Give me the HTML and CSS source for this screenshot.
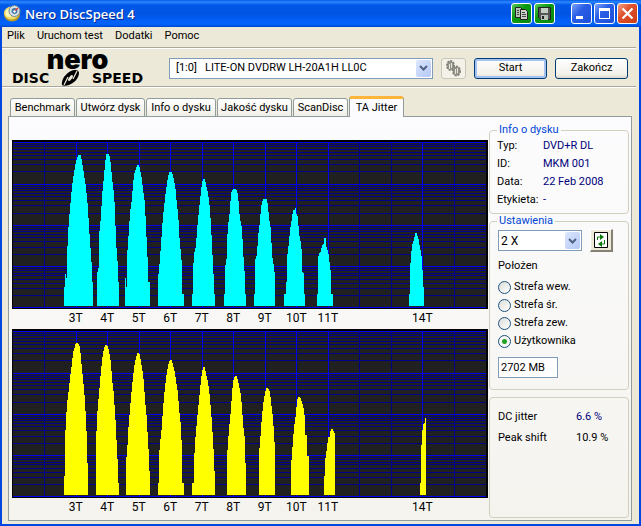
FILE: index.html
```html
<!DOCTYPE html>
<html lang="pl">
<head>
<meta charset="utf-8">
<title>Nero DiscSpeed 4</title>
<link rel="stylesheet" href="styles.css">
</head>
<body>
<div class="window">
  <header class="titlebar">
    <svg class="app-icon" viewBox="0 0 17 17" aria-hidden="true">
      <ellipse cx="8" cy="10" rx="8" ry="6.500" fill="#b99a25"/>
      <ellipse cx="7.500" cy="8" rx="7.500" ry="6.500" fill="#f0dc6a"/>
      <ellipse cx="5" cy="8" rx="3.500" ry="4" fill="#fff7b8"/>
      <circle cx="10.500" cy="6" r="5.500" fill="#d9e2e6" stroke="#6f8796"/>
      <circle cx="10.500" cy="6" r="3" fill="#3d7ba8"/>
      <path d="M10.500 6L14 3" stroke="#d33" stroke-width="1.500"/>
      <circle cx="10.500" cy="6.500" r="1.200" fill="#fff"/>
    </svg>
    <h1 class="title">Nero DiscSpeed 4</h1>
    <div class="title-buttons">
      <button class="tb green" aria-label="Kopiuj"><svg viewBox="0 0 19 19"><path d="M3.500 3.500h5l2 2v8h-7z" fill="#b8c4b8" stroke="#222"/><path d="M8.500 5.500h5l2 2v8h-7z" fill="#c8d2c8" stroke="#222"/><path d="M10 8.500h3M10 10.500h4M10 12.500h4M5 6.500h2M5 8.500h2M5 10.500h2" stroke="#444"/></svg></button>
      <button class="tb green" aria-label="Zapisz"><svg viewBox="0 0 19 19"><path d="M3.500 3.500h12v12h-10l-2-2z" fill="#555" stroke="#222"/><path d="M6 4h7v5H6z" fill="#c3cec3"/><path d="M6 11h7v5H6z" fill="#b8c4b8"/><path d="M7 12h2v3H7z" fill="#222"/></svg></button>
      <span class="spacer"></span>
      <button class="tb blue" aria-label="Minimalizuj"><svg viewBox="0 0 19 19"><path d="M4 12h7v3H4z" fill="#fff"/></svg></button>
      <button class="tb blue" aria-label="Maksymalizuj"><svg viewBox="0 0 19 19"><path d="M4 4h11v11H4zM5 7v7h9V7z" fill="#fff" fill-rule="evenodd"/></svg></button>
      <button class="tb red" aria-label="Zamknij"><svg viewBox="0 0 19 19"><path d="M4.500 4.500l10 10M14.500 4.500l-10 10" stroke="#fff" stroke-width="2.200"/></svg></button>
    </div>
  </header>

  <nav class="menu">
    <a href="#">Plik</a><a href="#">Uruchom test</a><a href="#">Dodatki</a><a href="#">Pomoc</a>
  </nav>

  <div class="toolbar">
    <div class="logo">
      <span class="logo-top">nero</span>
      <span class="logo-bottom"><span>DISC</span><svg viewBox="0 0 20 16" aria-hidden="true"><path d="M1 15C0 10 4 4 10 1C14 -1 18 0 18 3C18 8 13 13 8 15C5 16 2 16 1 15z" fill="#000"/><path d="M3 15L7 7M12 9L16 1" stroke="#ece9d8" stroke-width="1.200"/><ellipse cx="9.500" cy="8" rx="3.500" ry="1.500" transform="rotate(-55 9.500 8)" fill="#ece9d8"/></svg><span>SPEED</span></span>
    </div>
    <div class="select drive">
      <select aria-label="Napęd"><option>[1:0]&nbsp;&nbsp; LITE-ON DVDRW LH-20A1H LL0C</option></select>
      <span class="arrow"><svg viewBox="0 0 9 6"><path d="M1 1l3.500 3.500L8 1" /></svg></span>
    </div>
    <button class="gear" aria-label="Opcje" disabled>
      <svg viewBox="0 0 17 17"><g fill="#96958c" stroke="#85847c" stroke-width="2"><ellipse cx="5.500" cy="5.500" rx="3.500" ry="4.500" stroke-dasharray="2 1"/><ellipse cx="11.500" cy="11" rx="3.500" ry="4.500" stroke-dasharray="2 1"/></g><path d="M4.500 4v5M6.500 3v5M10.500 9v5M12.500 8v5" stroke="#e8e6da"/></svg>
    </button>
    <button class="push default">Start</button>
    <button class="push">Zakończ</button>
  </div>

  <div class="tabs" role="tablist">
    <button role="tab">Benchmark</button>
    <button role="tab">Utwórz dysk</button>
    <button role="tab">Info o dysku</button>
    <button role="tab">Jakość dysku</button>
    <button role="tab">ScanDisc</button>
    <button role="tab" class="active" aria-selected="true">TA Jitter</button>
  </div>

  <main class="panel">
    <section class="charts">
      <svg class="chart" viewBox="0 0 476 169" preserveAspectRatio="none" role="img" aria-label="Jitter">
        <defs>
          <g id="grid">
            <path fill="#202020" d="M1 2h473v166H1z"/>
            <path stroke="#00008b" d="M1 4.500h473M1 6.500h473M1 9.500h473M1 12.500h473M1 15.500h473M1 19.500h473M1 24.500h473M1 31.500h473M1 46.500h473M1 48.500h473M1 50.500h473M1 53.500h473M1 56.500h473M1 60.500h473M1 65.500h473M1 73.500h473M1 87.500h473M1 89.500h473M1 91.500h473M1 94.500h473M1 97.500h473M1 101.500h473M1 107.500h473M1 114.500h473M1 128.500h473M1 130.500h473M1 133.500h473M1 135.500h473M1 139.500h473M1 143.500h473M1 148.500h473M1 155.500h473M32.500 2v166M347.500 2v166M379.500 2v166M442.500 2v166"/>
            <path stroke="#0000f0" d="M1 2.500h473M1 44.500h473M1 85.500h473M1 126.500h473M1 167.500h473M64.500 2v166M95.500 2v166M127.500 2v166M158.500 2v166M190.500 2v166M221.500 2v166M253.500 2v166M284.500 2v166M316.500 2v166M410.500 2v166"/>
          </g>
        </defs>
        <path d="M0 0h476v169H0z"/>
        <use href="#grid"/>
        <g fill="#0ff" transform="scale(.33333) translate(-36 -30)">
          <path d="M192 528V471H195V432H198V444H201V387L204 312L207 273L210 234L216 172L222 127L228 95L234 76L237 73L242 76L246 95L252 133L258 172L264 235L267 290L270 330L273 374L276 415V456H279V528z"/>
          <path d="M291 528V427H294L297 400V318L301 280L304 235L307 190L310 160L313 127L316 95L319 73H327L330 85L333 103L336 145L342 190L345 240L348 335L351 370L354 415V456H357V528z"/>
          <path d="M375 528V444H378V471H381V380L384 340L387 295L390 250L396 205L399 165L402 135L408 117L411 105H417L420 118L426 150L429 177L435 220L438 290L441 350L444 410V456H450V528z"/>
          <path d="M474 528V432H477L480 375L483 350L486 295L489 262L495 205L501 160L504 140L508 125H516L520 140L526 170L529 205L535 260L538 320L541 350L547 415V492H552V528z"/>
          <path d="M576 528V492H579V430L582 370L588 350L591 300L597 240L600 210L606 160L609 148H615L618 163L624 190L630 235L633 290L636 340L639 410L642 450V492H645V528z"/>
          <path d="M672 528V492H675V415L681 380V335L684 290L690 240L693 190L699 178H709L714 192L717 235L720 267L726 295L729 357L732 402L735 445V492H738V528z"/>
          <path d="M762 528V492H765V393L771 375L774 320L780 275L783 232L789 207H800L804 225L807 265L813 300L816 375L822 410V426H825V528z"/>
          <path d="M852 528V492H858V456H861V385L867 335L870 300L876 265L879 240H885V234H888V250L894 262L897 310L903 340L906 370V425L912 432V492H915V528z"/>
          <path d="M951 528V492H954V384L957 370L963 365L966 346L972 340V324H978V348L984 365L987 378L990 410L993 432V492H999V528z"/>
          <path d="M1227 528V492H1230V417L1233 380L1236 348L1242 330L1245 310H1251L1254 325L1257 330L1260 360H1263L1266 395L1269 440V471H1272V528z"/>
        </g>
      </svg>
      <div class="axis"><span>3T</span><span>4T</span><span>5T</span><span>6T</span><span>7T</span><span>8T</span><span>9T</span><span>10T</span><span>11T</span><span class="last">14T</span></div>
      <svg class="chart" viewBox="0 0 476 169" preserveAspectRatio="none" role="img" aria-label="Jitter">
        <path d="M0 0h476v169H0z"/>
        <use href="#grid"/>
        <g fill="#ff0" transform="scale(.33333) translate(-36 -27)">
          <path d="M192 525V468H195V365L198 300L201 252L207 205L210 175L216 130L219 100L225 78L228 69H234L240 82L243 115L249 175L255 240L258 300L261 365V430H264V525z"/>
          <path d="M288 525V373L291 295L294 255L300 190L303 150L309 100L315 75H322L327 92L333 130L336 175L342 225L345 280L348 320L351 400L354 430V489H357V525z"/>
          <path d="M378 525V412H381L384 340L387 305L390 265L396 200L402 145L408 112L413 99H418L423 124L429 160L432 190L435 240L441 300L444 370L447 400V453H450V525z"/>
          <path d="M474 525V489H477V408L480 372L486 315L489 265L495 200L501 155L507 125L510 120H515L522 145L528 180L534 220L537 265L543 320L546 400V489H552V525z"/>
          <path d="M576 525V489H582V430L585 370L591 300L597 240L600 210L606 155L610 141H614L618 160L624 185L630 235L636 310L639 360L642 410V453H645V525z"/>
          <path d="M681 525V414L684 370L687 325L693 270L696 220L699 190L702 172L705 168H710L717 195L723 225L726 265L729 300L732 348H735V430H738V525z"/>
          <path d="M777 525V403L780 365L783 330L786 285L792 235L798 205H804L810 215L813 245L819 295L822 340V367H825V525z"/>
          <path d="M873 525V441L876 400L879 362L882 325L888 280L891 245L894 231H900L906 245L912 270L915 300V345H921V408H927V525z"/>
          <path d="M972 525V468H975V423L981 385L984 352H990V338L993 327H999L1002 340H1005V525z"/>
          <path d="M1260 525V489H1263V400L1266 350L1269 312L1275 308V295H1278V525z"/>
        </g>
      </svg>
      <div class="axis"><span>3T</span><span>4T</span><span>5T</span><span>6T</span><span>7T</span><span>8T</span><span>9T</span><span>10T</span><span>11T</span><span class="last">14T</span></div>
    </section>

    <aside class="side">
      <fieldset class="group">
        <legend>Info o dysku</legend>
        <dl class="info">
          <dt>Typ:</dt><dd>DVD+R DL</dd>
          <dt>ID:</dt><dd>MKM 001</dd>
          <dt>Data:</dt><dd>22 Feb 2008</dd>
          <dt>Etykieta:</dt><dd>-</dd>
        </dl>
      </fieldset>
      <fieldset class="group">
        <legend>Ustawienia</legend>
        <div class="speed-row">
          <div class="select speed">
            <select aria-label="Prędkość"><option>2 X</option></select>
            <span class="arrow"><svg viewBox="0 0 9 6"><path d="M1 1l3.500 3.500L8 1" /></svg></span>
          </div>
          <button class="refresh" aria-label="Odśwież"><svg viewBox="0 0 14 16"><path d="M.500.500h13v15H.500z" fill="#fff" stroke="#000"/><path d="M3.500 8V5H7M10.500 8v4H7" fill="none" stroke="#0a7a0a"/><path d="M6 2l4 3-4 3zM8 9l-4 3 4 3z" fill="#0a7a0a"/></svg></button>
        </div>
        <p class="caption">Położen</p>
        <label class="radio"><input type="radio" name="zone">Strefa wew.</label>
        <label class="radio"><input type="radio" name="zone">Strefa śr.</label>
        <label class="radio"><input type="radio" name="zone">Strefa zew.</label>
        <label class="radio"><input type="radio" name="zone" checked>Użytkownika</label>
        <input class="size" type="text" value="2702 MB" aria-label="Rozmiar">
      </fieldset>
      <section class="group results">
        <dl>
          <dt>DC jitter</dt><dd class="navy">6.6 %</dd>
          <dt>Peak shift</dt><dd>10.9 %</dd>
        </dl>
      </section>
    </aside>
  </main>
</div>
</body>
</html>
```
FILE: styles.css
```css
* { box-sizing: border-box; }
body {
  margin: 0;
  font: 11px/14px Roboto, "Liberation Sans", sans-serif;
  color: #000;
}
button, input, select { font: inherit; color: inherit; margin: 0; padding: 0; }
svg { display: block; }
dl, dd, p { margin: 0; }

.window {
  display: flex;
  flex-direction: column;
  min-height: 100vh;
  background: #ece9d8;
  border: solid #0046e0;
  border-width: 0 2px 2px;
}

/* Title bar */
.titlebar {
  display: flex;
  align-items: center;
  height: 27px;
  margin: 0 -2px;
  padding: 0 3px 0 4px;
  background: linear-gradient(#0a5be8 0, #2a86ff 2px, #0058e8 5px, #0054e3 14px, #0262fb 22px, #0060f5 25px, #0040c4 27px);
}
.app-icon { width: 17px; height: 17px; }
.title {
  flex: 1;
  margin: 0 0 0 4px;
  font: 600 13px/18px "Open Sans", sans-serif;
  color: #fff;
  text-shadow: 1px 1px #0a2a8c;
}
.title-buttons { display: flex; gap: 2px; }
.spacer { width: 12px; }
.tb {
  width: 21px;
  height: 21px;
  border: 1px solid #fff;
  border-radius: 3px;
}
.tb svg { width: 19px; height: 19px; }
.green { background: linear-gradient(135deg, #5cc75c, #0a9a12 40%, #0b8a10); }
.blue { background: linear-gradient(135deg, #7aa2f8, #2a5ee6 40%, #1c4fd8); }
.red { background: linear-gradient(135deg, #f0a088, #e0512c 40%, #cc3c14); }

/* Menu */
.menu {
  display: flex;
  gap: 12px;
  height: 22px;
  margin-right: 3px;
  padding: 2px 5px;
  border-bottom: 1px solid #fff;
  box-shadow: inset 0 -1px #aca899;
}
.menu a { color: #000; text-decoration: none; }

/* Toolbar */
.toolbar {
  display: flex;
  align-items: center;
  gap: 8px;
  height: 39px;
  margin-right: 3px;
  padding: 0 8px 0 10px;
  border-bottom: 1px solid #fff;
  box-shadow: inset 0 -1px #aca899;
}
.logo {
  display: flex;
  flex-direction: column;
  align-items: center;
  width: 131px;
  margin-right: 18px;
  color: #000;
}
.logo-top { font: 900 27px/20px Inter, sans-serif; }
.logo-bottom {
  display: flex;
  justify-content: space-between;
  align-items: center;
  width: 100%;
  font: bold 14px/16px "DejaVu Sans", sans-serif;
}
.logo-bottom svg { width: 20px; height: 16px; }

.select { position: relative; height: 21px; }
.select select {
  width: 100%;
  height: 100%;
  padding: 0 20px 0 6px;
  border: 1px solid #7f9db9;
  border-radius: 0;
  background: #fff;
  appearance: none;
}
.arrow {
  position: absolute;
  top: 2px;
  right: 2px;
  bottom: 2px;
  display: grid;
  place-items: center;
  width: 15px;
  border-radius: 2px;
  background: linear-gradient(135deg, #dce6fd, #b4c8f6);
  pointer-events: none;
}
.arrow svg { width: 9px; height: 6px; }
.arrow path { fill: none; stroke: #4d6185; stroke-width: 2; }
.drive { flex: 1; }
.gear {
  display: grid;
  place-items: center;
  width: 25px;
  height: 21px;
  border: 1px solid #c9c7ba;
  border-radius: 3px;
  background: #f3f1e8;
}
.gear svg { width: 17px; height: 17px; }
.push {
  width: 73px;
  height: 21px;
  border: 1px solid #003c74;
  border-radius: 3px;
  background: linear-gradient(#fff, #f2f1ea 80%, #dcd8cc);
}
.default { box-shadow: inset 0 0 0 2px #a6c2f2; }

/* Tabs */
.tabs {
  display: grid;
  grid-template-columns: 65px 69px 70px 75px 55px 55px;
  gap: 1px;
  align-items: end;
  height: 29px;
  margin: 0 7px -1px 8px;
}
.tabs button {
  height: 19px;
  border: 1px solid #919b9c;
  border-radius: 3px 3px 0 0;
  background: linear-gradient(#fff, #f0efe6);
  white-space: nowrap;
}
.tabs .active {
  position: relative;
  z-index: 1;
  height: 21px;
  border-top: 3px solid #ffb43a;
  border-bottom: 0;
  background: #fcfcfe;
}

/* Panel */
.panel {
  display: flex;
  flex: 1;
  gap: 1px;
  margin: 0 7px 3px 6px;
  padding: 6px 2px 2px 3px;
  border: 1px solid #919b9c;
  background: linear-gradient(#fcfcfe, #f4f3ee);
}
.charts { flex: 1; min-width: 0; padding-top: 17px; }
.chart { width: 100%; height: 169px; shape-rendering: crispEdges; }
.axis {
  display: grid;
  grid-template-columns: repeat(12, 1fr);
  height: 20px;
  padding: 2px 50px 0 48px;
  font-size: 12px;
  text-align: center;
}
.axis .last { grid-column: 12; }

.side { display: flex; flex-direction: column; width: 140px; }
.group {
  min-width: 0;
  margin: 0;
  padding: 0 7px 4px;
  border: 1px solid #d0d0bf;
  border-radius: 4px;
}
legend { padding: 0 2px; color: #0046d5; }
.info {
  display: grid;
  grid-template-columns: 46px 1fr;
  line-height: 18px;
}
.info dd { color: #00007a; white-space: nowrap; }

.speed-row { display: flex; gap: 8px; align-items: center; padding: 1px 0 0 1px; }
.speed { width: 84px; }
.speed select { padding-left: 2px; font-size: 12px; }
.refresh {
  display: grid;
  place-items: center;
  width: 23px;
  height: 23px;
  border: solid;
  border-width: 1px 2px 2px 1px;
  border-color: #fff #848074 #848074 #fff;
  background: #ece9d8;
}
.refresh svg { width: 14px; height: 16px; }
.caption { margin: 7px 0 5px 1px; }
.radio { display: flex; align-items: center; gap: 3px; height: 18px; margin-left: 1px; }
.radio input {
  width: 13px;
  height: 13px;
  border: 1px solid #1c5180;
  border-radius: 50%;
  background: linear-gradient(135deg, #dcdcd7, #fff);
  appearance: none;
}
.radio input:checked { background: radial-gradient(circle, #22a122 0 2px, #f6f6f4 3px); }
.size {
  display: block;
  width: 60px;
  height: 21px;
  margin: 7px 0 7px 1px;
  padding: 0 2px;
  border: 1px solid #7f9db9;
  background: #fff;
}
.results { flex: 1; margin-top: 7px; padding: 8px; }
.results dl { display: grid; grid-template-columns: 78px 1fr; line-height: 21px; }
.navy { color: #00007a; }
```
